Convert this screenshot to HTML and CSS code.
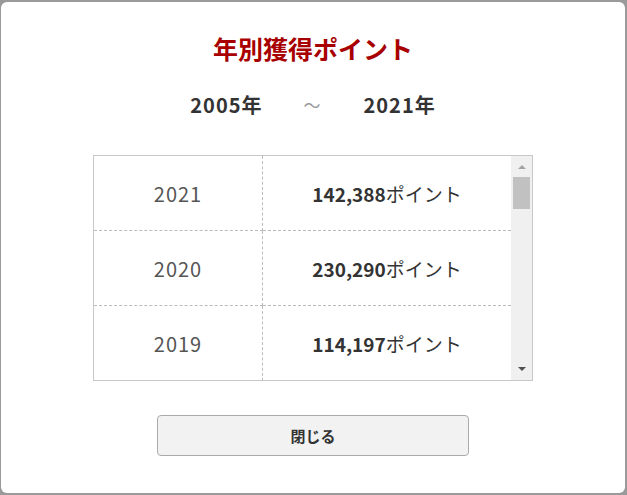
FILE: index.html
```html
<!DOCTYPE html>
<html>
<head>
    <title>年別獲得ポイント</title>
    <meta charset="utf-8">
    <link rel="stylesheet" href="styles.css">
</head>
<body>
<div class="modal">
    <h1 class="title">年別獲得ポイント</h1>

    <div class="range">
        <span class="range-from">2005年</span>
        <span class="range-sep">～</span>
        <span class="range-to">2021年</span>
    </div>

    <div class="list-box">
        <div class="list">
            <table class="points">
                <tr>
                    <td class="year">2021</td>
                    <td class="value"><strong>142,388</strong>ポイント</td>
                </tr>
                <tr>
                    <td class="year">2020</td>
                    <td class="value"><strong>230,290</strong>ポイント</td>
                </tr>
                <tr>
                    <td class="year">2019</td>
                    <td class="value"><strong>114,197</strong>ポイント</td>
                </tr>
            </table>
        </div>
        <div class="scrollbar">
            <span class="arrow up"></span>
            <div class="track">
                <div class="thumb"></div>
            </div>
            <span class="arrow down"></span>
        </div>
    </div>

    <div class="actions">
        <button class="close" type="button">閉じる</button>
    </div>
</div>
</body>
</html>
```

FILE: styles.css
```css
html, body {
    margin: 0;
    padding: 0;
    height: 100%;
}

body {
    background: #9a9a9a;
    font: 16px "Noto Sans CJK JP", "Noto Sans", sans-serif;
    color: #333;
    overflow: hidden;
}

.modal {
    box-sizing: border-box;
    margin: 2px 2px 0 1px;
    height: 491px;
    background: #fff;
    border-radius: 6px;
    padding-top: 28px;
}

.title {
    margin: 0;
    text-align: center;
    font-size: 25px;
    line-height: 36px;
    font-weight: bold;
    color: #a80000;
}

.range {
    display: flex;
    justify-content: center;
    align-items: center;
    margin-top: 24px;
    height: 28px;
    font-size: 20px;
    letter-spacing: 1px;
    font-weight: bold;
    color: #333;
}

.range-sep {
    font-weight: normal;
    font-size: 17px;
    letter-spacing: 0;
    color: #999;
    margin: 0 43px 0 41px;
}

.list-box {
    display: flex;
    width: 440px;
    height: 226px;
    box-sizing: border-box;
    margin: 37px 0 0 92px;
    border: 1px solid #c8c8c8;
}

.list {
    flex: 1;
    overflow: hidden;
}

.points {
    width: 100%;
    border-collapse: collapse;
}

.points td {
    height: 74px;
    padding: 0;
    text-align: center;
    border-bottom: 1px dashed #bbb;
    font-size: 19px;
    color: #333;
}

.points td.year {
    width: 168px;
    border-right: 1px dashed #bbb;
    font-size: 20px;
    letter-spacing: 1px;
    font-weight: normal;
    color: #555;
}

.points td.value strong {
    font-weight: bold;
}

.scrollbar {
    width: 21px;
    background: #f0f0f0;
    display: flex;
    flex-direction: column;
    align-items: center;
}

.arrow {
    width: 0;
    height: 0;
    border-left: 4px solid transparent;
    border-right: 4px solid transparent;
}

.arrow.up {
    margin: 9px 0 8px;
    border-bottom: 4px solid #a3a3a3;
}

.arrow.down {
    margin: 5px 0 9px;
    border-top: 4px solid #505050;
}

.track {
    flex: 1;
    width: 17px;
}

.thumb {
    height: 32px;
    background: #c1c1c1;
}

.actions {
    display: flex;
    justify-content: center;
    margin-top: 34px;
}

.close {
    box-sizing: border-box;
    width: 312px;
    height: 41px;
    background: #f2f2f2;
    border: 1px solid #aaa;
    border-radius: 4px;
    font: bold 15px "Noto Sans CJK JP", sans-serif;
    color: #333;
}
```
